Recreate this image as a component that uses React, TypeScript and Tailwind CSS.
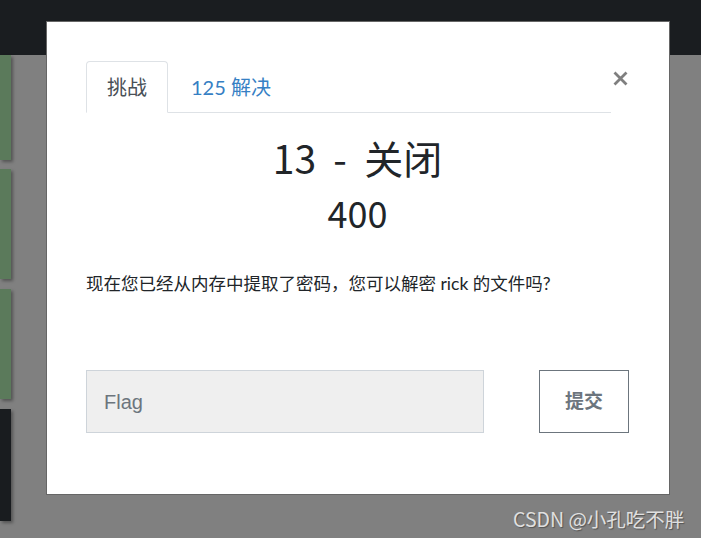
import React from "react";

const sans = "font-['Lato','Noto_Sans_CJK_SC',sans-serif]";

export default function App() {
  return (
    <div className="relative h-[538px] w-[701px] overflow-hidden bg-[#808080]">
      {/* navbar (dimmed by backdrop) */}
      <div className="h-[55px] bg-[#1a1d20]" />
      {/* page cards (dimmed) */}
      <div className="flex w-[11px] flex-col">
        <div className="h-[105px] bg-[#5b7a5b] shadow-[2px_2px_3px_rgba(0,0,0,0.35)]" />
        <div className="mt-[9px] h-[110px] bg-[#5b7a5b] shadow-[2px_2px_3px_rgba(0,0,0,0.35)]" />
        <div className="mt-[10px] h-[110px] bg-[#5b7a5b] shadow-[2px_2px_3px_rgba(0,0,0,0.35)]" />
        <div className="mt-[10px] h-[112px] bg-[#191c1f] shadow-[2px_2px_3px_rgba(0,0,0,0.35)]" />
      </div>

      {/* modal */}
      <div
        className={`absolute left-[46px] top-[21px] h-[474px] w-[624px] border border-[#666] bg-white pl-[39px] pr-[40px] pt-[39px] ${sans}`}
      >
        <div className="flex items-start">
          <ul className="flex flex-1 border-b border-[#dee2e6]">
            <li className="-mb-px flex h-[52px] items-center rounded-t-[4px] border border-[#dee2e6] border-b-white bg-white px-[20px] text-[20px] text-[#495057]">
              挑战
            </li>
            <li className="-mb-px flex h-[52px] items-center border border-transparent px-[22px] text-[20px] text-[#3680c4]">
              125 解决
            </li>
          </ul>
          <div className="flex w-[18px] justify-end pt-[10px]">
            <svg width="15" height="15" viewBox="0 0 15 15" className="mr-[1px]">
              <path d="M1.5 1.5 L13.5 13.5 M13.5 1.5 L1.5 13.5" stroke="#7f7f7f" strokeWidth="2.8" />
            </svg>
          </div>
        </div>

        <div className="mt-[20px] text-center font-['Noto_Sans_CJK_SC',sans-serif] text-[39px] leading-[48px] text-[#212529] [word-spacing:8.5px]">
          13 - 关闭
        </div>
        <div className="mt-[10px] text-center font-['Noto_Sans_CJK_SC',sans-serif] text-[36px] leading-[43px] text-[#212529]">
          400
        </div>

        <p className="mt-[36px] text-[17.5px] leading-[27px] text-[#212529]">
          现在您已经从内存中提取了密码，您可以解密 rick 的文件吗?
        </p>

        <div className="mt-[73px] flex justify-between">
          <div className="flex h-[63px] w-[398px] items-center border border-[#ced4da] bg-[#efefef] pl-[17px] font-['Liberation_Sans',sans-serif] text-[20px] text-[#6c757d]">
            Flag
          </div>
          <div className="flex h-[63px] w-[90px] items-center justify-center border border-[#6c757d] bg-white text-[19px] font-bold text-[#6c757d]">
            提交
          </div>
        </div>
      </div>

      {/* watermark */}
      <div className="absolute left-[513px] top-[506px] font-['Noto_Sans_CJK_SC',sans-serif] text-[19.5px] leading-[26px] text-[#e0e0e0] [text-shadow:1px_1px_1px_rgba(0,0,0,0.35)]">
        CSDN @小孔吃不胖
      </div>
    </div>
  );
}
